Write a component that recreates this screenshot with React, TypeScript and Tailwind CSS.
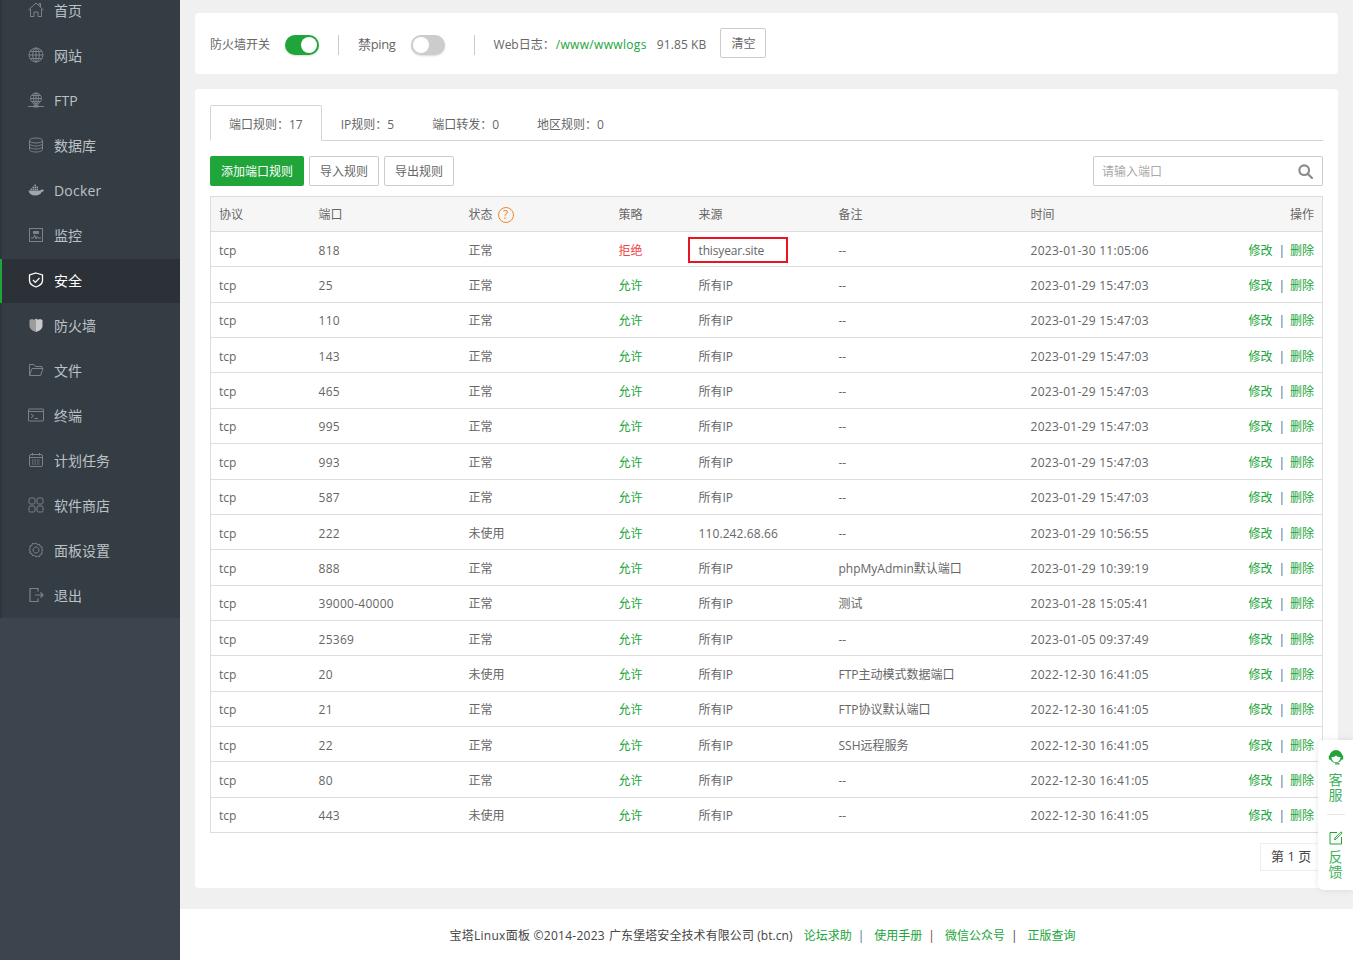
import React from "react";

const I = ({ children }: { children: React.ReactNode }) => (
  <svg width="16" height="16" viewBox="0 0 16 16" fill="none" stroke="currentColor" strokeWidth="1" className="w-[16px] h-[16px] shrink-0">
    {children}
  </svg>
);

const menu: [string, React.ReactNode][] = [
  ["首页", <I><path d="M.5 8 8 1l7.500 7M2.500 7v7.500h3.500V10h4v4.500h3.500V7M11 3V1.500h1.500V5" /></I>],
  ["网站", <I><circle cx="8" cy="8" r="7" /><ellipse cx="8" cy="8" rx="3.300" ry="7" /><path d="M1 8h14M2 4.500h12M2 11.500h12M8 1v14" /></I>],
  ["FTP", <I><circle cx="8" cy="6.500" r="5.500" /><ellipse cx="8" cy="6.500" rx="2.500" ry="5.500" /><path d="M2.500 6.500h11M3.500 3.500h9M3.500 9.500h9M8 1v11M0 14.500h16" /><rect x="6" y="13" width="4" height="2" fill="currentColor" /></I>],
  ["数据库", <I><ellipse cx="8" cy="3.500" rx="6.500" ry="2.500" /><path d="M1.500 3.500v9c0 1.400 2.900 2.500 6.500 2.500s6.500-1.100 6.500-2.500v-9M1.500 6.500c0 1.400 2.900 2.500 6.500 2.500s6.500-1.100 6.500-2.500M1.500 9.500c0 1.400 2.900 2.500 6.500 2.500s6.500-1.100 6.500-2.500" /></I>],
  ["Docker", <svg width="16" height="16" viewBox="0 0 16 16" className="w-[16px] h-[16px] shrink-0"><path d="M.5 8.500h11.700c.5-.9 1.400-1.200 2.300-.9l1.500.6c-.5 1-1.300 1.500-2.300 1.500-1 2.500-3.200 3.800-6.200 3.800-4 0-6.500-1.700-7-5z" fill="#a3a6a9" /><path d="M2.500 6.500h1.500v1.500H2.500zM4.500 6.500H6v1.500H4.500zM6.500 6.500H8v1.500H6.500zM8.500 6.500H10v1.500H8.500zM4.500 4.500H6V6H4.500zM6.500 4.500H8V6H6.500zM8.500 4.500H10V6H8.500zM6.500 2.500H8V4H6.500z" fill="#9a9da0" /></svg>],
  ["监控", <I><rect x="1.500" y="1.500" width="13" height="13" /><path d="M3 11h2.500l1.200-3 1.300 4 1.200-2.500.8 1.500H13" /><rect x="5" y="4" width="6" height="3" fill="currentColor" stroke="none" /></I>],
  ["安全", <I><path d="M8 1 14.500 3v5.500c0 3.200-3 5.300-6.500 6.500C4.500 13.800 1.500 11.700 1.500 8.500V3z" strokeWidth="1.300" /><path d="m5 8 2.300 2.300L11.500 6" strokeWidth="1.200" /></I>],
  ["防火墙", <svg width="16" height="16" viewBox="0 0 16 16" className="w-[16px] h-[16px] shrink-0"><path d="M8 1.500 10 2.800 12 2l2.500 1v6c0 2.800-3 5-6.500 6z" fill="#c9c9c9" /><path d="M8 1.500 6 2.800 4 2 1.500 3v6c0 2.800 3 5 6.500 6z" fill="#9c9c9c" /></svg>],
  ["文件", <I><path d="M1.500 13.500v-11h4.500l1.500 2H14v2M1.500 13.500h11l2.500-7H4z" /></I>],
  ["终端", <I><rect x="0.500" y="2" width="15" height="12" rx="0.500" /><path d="M1 4.500h14" /><path d="m3 7 2.500 2L3 11M6.500 11.500H10" /></I>],
  ["计划任务", <I><rect x="1.500" y="2.500" width="13" height="12" rx="1.500" /><path d="M1.500 5.500h13M4.500 1v2.500M11.500 1v2.500" /><path d="M4 8h8M4 10h8M4 12h8" strokeDasharray="1.500 1" /></I>],
  ["软件商店", <I><rect x="1" y="1" width="6" height="6" rx="1.500" /><rect x="9" y="1" width="6" height="6" rx="1.500" /><rect x="1" y="9" width="6" height="6" rx="1.500" /><rect x="9" y="9" width="6" height="6" rx="1.500" /></I>],
  ["面板设置", <I><path d="M8 1l1.400 1.800 2.200-.5.500 2.200 2.200.6-.7 2.100L15 8l-1.400 1.800.7 2.100-2.200.6-.5 2.200-2.200-.5L8 15l-1.400-1.800-2.200.5-.5-2.200-2.200-.6.700-2.100L1 8l1.400-1.800-.7-2.100 2.200-.6.500-2.200 2.200.5z" /><path d="M8 5a3 3 0 1 0 .01 0z" /></I>],
  ["退出", <I><path d="M10 4.500V1.500H2v13h8v-3M7 8h8M12.500 5.500 15 8l-2.500 2.500" strokeWidth="1.200" /></I>],
];

const d1 = "2023-01-29 15:47:03";
const d2 = "2022-12-30 16:41:05";
const rows: [string, string, string, string, string, string][] = [
  ["818", "正常", "拒绝", "thisyear.site", "--", "2023-01-30 11:05:06"],
  ["25", "正常", "允许", "所有IP", "--", d1],
  ["110", "正常", "允许", "所有IP", "--", d1],
  ["143", "正常", "允许", "所有IP", "--", d1],
  ["465", "正常", "允许", "所有IP", "--", d1],
  ["995", "正常", "允许", "所有IP", "--", d1],
  ["993", "正常", "允许", "所有IP", "--", d1],
  ["587", "正常", "允许", "所有IP", "--", d1],
  ["222", "未使用", "允许", "110.242.68.66", "--", "2023-01-29 10:56:55"],
  ["888", "正常", "允许", "所有IP", "phpMyAdmin默认端口", "2023-01-29 10:39:19"],
  ["39000-40000", "正常", "允许", "所有IP", "测试", "2023-01-28 15:05:41"],
  ["25369", "正常", "允许", "所有IP", "--", "2023-01-05 09:37:49"],
  ["20", "未使用", "允许", "所有IP", "FTP主动模式数据端口", d2],
  ["21", "正常", "允许", "所有IP", "FTP协议默认端口", d2],
  ["22", "正常", "允许", "所有IP", "SSH远程服务", d2],
  ["80", "正常", "允许", "所有IP", "--", d2],
  ["443", "未使用", "允许", "所有IP", "--", d2],
];

const Switch = ({ on }: { on: boolean }) => (
  <span className={`relative block w-[34px] h-[20px] rounded-full shadow-[0_1px_2px_rgba(0,0,0,0.15)] ${on ? "bg-[#20a53a]" : "bg-[#cccccc]"}`}>
    <span className={`absolute top-[2px] w-[16px] h-[16px] rounded-full bg-white ${on ? "right-[2px]" : "left-[2px]"}`} />
  </span>
);

const Th = ({ children, className = "" }: { children?: React.ReactNode; className?: string }) => (
  <th className={`px-[8px] pt-[2px] font-normal text-left text-[12px] text-[#666] ${className}`}>{children}</th>
);

export default function App() {
  return (
    <div className="flex h-[960px] w-[1353px] overflow-hidden bg-[#f0f0f0] font-['Open_Sans','Noto_Sans_CJK_SC',sans-serif] text-[12px] text-[#666] relative">
      <aside className="w-[180px] shrink-0 bg-[#3c444d] overflow-hidden">
        <nav className="-mt-[12px] bg-[#353d44] border-l-[2px] border-[#2f363c]">
          {menu.map(([label, icon]) => {
            const active = label === "安全";
            return (
              <div key={label} className={`flex items-center h-[45px] pl-[26px] pb-[2px] gap-[10px] text-[14px] border-t ${active ? "bg-[#2c3138] border-[#353d44] text-white relative" : "border-[#353d44] text-[#bcc1c6]"}`}>
                {active && <span className="absolute -left-[2px] top-0 h-full w-[2px] bg-[#20a53a]" />}
                <span className={`w-[16px] flex justify-center ${active ? "text-white" : "text-[#7d8287]"}`}>{icon}</span>
                <span className={label === "Docker" || label === "FTP" ? "tracking-[0.2px]" : ""}>{label}</span>
              </div>
            );
          })}
        </nav>
      </aside>

      <main className="flex-1 min-w-0 flex flex-col">
        <div className="flex-1 pt-[13px] px-[15px]">
          <section className="h-[61px] bg-white rounded-[4px] flex items-center pl-[15px]">
            <span className="pt-[3px]">防火墙开关</span>
            <span className="ml-[15px] mt-[3px]"><Switch on /></span>
            <span className="ml-[19px] mt-[3px] w-px h-[20px] bg-[#ccc]" />
            <span className="ml-[19px] text-[13px] tracking-[-0.35px] pt-[3px]">禁ping</span>
            <span className="ml-[15px] mt-[3px]"><Switch on={false} /></span>
            <span className="ml-[29px] mt-[3px] w-px h-[20px] bg-[#ccc]" />
            <span className="ml-[19px] pt-[2px]">Web日志：</span>
            <span className="ml-[1px] text-[#20a53a] pt-[2px] tracking-[0.33px]">/www/wwwlogs</span>
            <span className="ml-[10px] pt-[2px] tracking-[0.1px]">91.85 KB</span>
            <button className="ml-[14px] w-[46px] h-[30px] -mt-[1px] pt-[1px] border border-[#ccc] rounded-[2px] bg-white text-[12px] text-[#666]">清空</button>
          </section>

          <section className="mt-[15px] h-[799px] bg-white rounded-[4px] px-[15px] pt-[16px]">
            <div className="flex h-[36px] border-b border-[#d3d3dc] text-[12px]">
              <div className="h-[36px] px-[18px] pt-[4px] flex items-center border border-[#d3d3dc] border-b-white bg-white rounded-t-[2px]">端口规则：17</div>
              <div className="px-[19px] pt-[4px] flex items-center">IP规则：5</div>
              <div className="px-[19px] pt-[4px] flex items-center">端口转发：0</div>
              <div className="px-[19px] pt-[4px] flex items-center">地区规则：0</div>
            </div>

            <div className="flex items-center mt-[15px] h-[30px]">
              <button className="w-[94px] h-[30px] pt-[2px] rounded-[2px] bg-[#20a53a] text-white text-[12px]">添加端口规则</button>
              <button className="ml-[5px] w-[70px] h-[30px] pt-[2px] rounded-[2px] border border-[#ccc] text-[12px] text-[#666]">导入规则</button>
              <button className="ml-[5px] w-[70px] h-[30px] pt-[2px] rounded-[2px] border border-[#ccc] text-[12px] text-[#666]">导出规则</button>
              <div className="ml-auto w-[230px] h-[30px] rounded-[2px] border border-[#ccc] flex items-center pl-[8px] pr-[9px] justify-between">
                <span className="text-[#a9a9a9] pt-[2px]">请输入端口</span>
                <svg width="15" height="15" viewBox="0 0 14 14" fill="none" stroke="#8a8a8a" strokeWidth="2"><circle cx="5.800" cy="5.800" r="4.500" /><path d="m9 9 4 4" strokeLinecap="round" /></svg>
              </div>
            </div>

            <table className="mt-[10px] w-[1113px] table-fixed border-collapse border border-[#ddd]">
              <colgroup>
                <col className="w-[100px]" /><col className="w-[150px]" /><col className="w-[150px]" /><col className="w-[80px]" /><col className="w-[140px]" /><col className="w-[192px]" /><col className="w-[180px]" /><col />
              </colgroup>
              <thead>
                <tr className="h-[35px] bg-[#f6f6f6] border-b border-[#ddd]">
                  <Th>协议</Th>
                  <Th>端口</Th>
                  <Th>
                    <span className="inline-flex items-center gap-[5px]">状态
                      <span className="w-[16px] h-[16px] rounded-full border border-[#f08a24] text-[#f08a24] flex items-center justify-center text-[12px] leading-none">?</span>
                    </span>
                  </Th>
                  <Th>策略</Th>
                  <Th>来源</Th>
                  <Th>备注</Th>
                  <Th>时间</Th>
                  <Th className="text-right">操作</Th>
                </tr>
              </thead>
              <tbody>
                {rows.map((r, i) => (
                  <tr key={i} className="h-[35.36px] border-b border-[#ddd]">
                    <td className="px-[8px] pt-[3px]">tcp</td>
                    <td className="px-[8px] pt-[3px] tracking-[0.27px]">{r[0]}</td>
                    <td className="px-[8px] pt-[3px]">{r[1]}</td>
                    <td className={`px-[8px] pt-[3px] ${r[2] === "拒绝" ? "text-[#ef4444]" : "text-[#20a53a]"}`}>{r[2]}</td>
                    <td className={`px-[8px] pt-[3px] relative ${i === 0 ? "tracking-[-0.15px]" : i === 8 ? "tracking-[0.1px]" : ""}`}>
                      {r[3]}
                      {i === 0 && <span className="absolute left-[-3px] top-[5px] w-[100px] h-[26px] border-[2px] border-[#e8141f]" />}
                    </td>
                    <td className="px-[8px] pt-[3px] whitespace-nowrap">{r[4]}</td>
                    <td className="px-[8px] pt-[3px] tracking-[0.27px]">{r[5]}</td>
                    <td className="px-[8px] pt-[3px] text-right whitespace-nowrap text-[#20a53a]">
                      修改<span className="ml-[6px] mr-[5px] text-[#2f6f8f]">|</span>删除
                    </td>
                  </tr>
                ))}
              </tbody>
            </table>

            <div className="flex justify-end mt-[10px]">
              <div className="h-[28px] w-[63px] border border-[#eee] pl-[10px] flex items-center text-[13px] text-[#444] whitespace-pre">第 1 页</div>
            </div>
          </section>
        </div>

        <footer className="h-[51px] mt-[21px] pt-[2px] pr-[8px] bg-white flex items-center justify-center text-[12px] text-[#444] shrink-0">
          <span className="tracking-[0.27px]">宝塔Linux面板 ©2014-2023 </span>
          <span className="ml-[4px] tracking-[0.08px]">广东堡塔安全技术有限公司 (bt.cn)</span>
          <span className="ml-[11px] text-[#20a53a]">论坛求助</span>
          <span className="ml-[6px] mr-[10px] text-[#3b6f8f]">|</span>
          <span className="text-[#20a53a]">使用手册</span>
          <span className="ml-[6px] mr-[10px] text-[#7a3b3b]">|</span>
          <span className="text-[#20a53a]">微信公众号</span>
          <span className="ml-[6px] mr-[10px] text-[#444]">|</span>
          <span className="text-[#20a53a]">正版查询</span>
        </footer>
      </main>

      <div className="absolute right-0 top-[740px] w-[35px] h-[150px] bg-white rounded-l-[6px] shadow-[0_0_6px_rgba(0,0,0,0.1)] flex flex-col items-center text-[14px] leading-[15px] text-[#3cb25a] pt-[10px]">
        <svg width="16" height="16" viewBox="0 0 16 16"><circle cx="8" cy="6.500" r="6.500" fill="#20a53a" /><path d="M3.500 7c2 0 3.500-.5 4.500-1.500C9 6.500 10.500 7 12.500 7c0 3-2 5.300-4.500 5.300S3.500 10 3.500 7z" fill="#fff" /><path d="M0.800 5.500h2v4h-2zM13.200 5.500h2v4h-2zM7 13.200h4.500v1.300H7z" fill="#20a53a" /></svg>
        <span className="mt-[6px] w-[14px] text-center">客服</span>
        <span className="mt-[12px] w-[18px] h-px bg-[#e5e5e5]" />
        <svg className="mt-[16px]" width="14" height="14" viewBox="0 0 14 14" fill="none" stroke="#20a53a" strokeWidth="1"><path d="M8 1.500H1v11.500h11.500V6" /><path d="M12 .8 13.200 2 7 8.300 5.500 8.700 5.900 7z" /></svg>
        <span className="mt-[4px] w-[14px] text-center">反馈</span>
      </div>
    </div>
  );
}
